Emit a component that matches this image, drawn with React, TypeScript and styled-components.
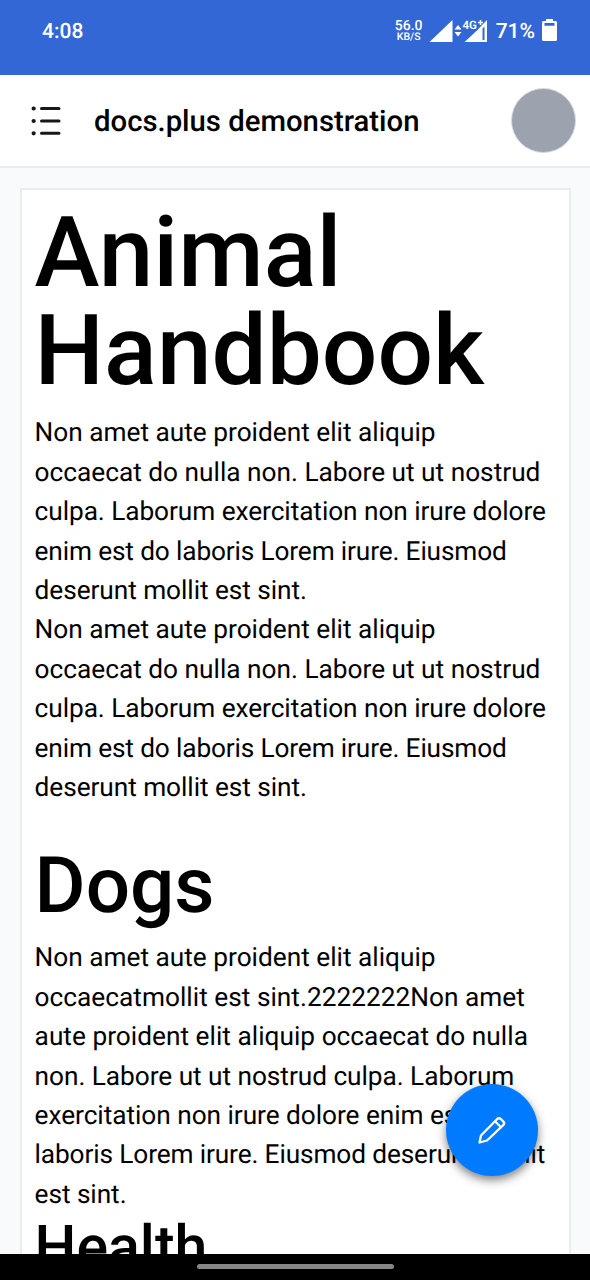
import styled, { createGlobalStyle } from 'styled-components';

const Global = createGlobalStyle`
  * { box-sizing: border-box; }
  body { margin: 0; font-family: Roboto, sans-serif; background: #000; color: #000; text-rendering: geometricPrecision; }
`;
const Screen = styled.div`
  position: relative; width: 590px; height: 1280px; display: flex; flex-direction: column; overflow: hidden;
`;
const StatusBar = styled.div`
  height: 75px; flex: none; background: #3367d6; color: #fff; display: flex; justify-content: space-between; align-items: center;
  padding: 0 33px 13px 42px; font-size: 21px; font-weight: 500;
`;
const StatusGroup = styled.div`display: flex; align-items: center;`;
const StatusText = styled.span`padding-top: 2px;`;
const Speed = styled.div`
  font-size: 14px; line-height: 11px; text-align: center; width: 28px; margin-right: 6px;
  small { display: block; font-size: 10.5px; line-height: 9px; }
`;
const Signals = styled.svg`display: block; margin-right: 7px;`;
const Battery = styled.svg`display: block; margin-left: 7px;`;
const Header = styled.header`
  height: 93px; flex: none; background: #fff; border-bottom: 2px solid #e8ecee; display: flex; align-items: center; padding: 0 14px 0 31px;
`;
const Title = styled.div`font-size: 29.3px; font-weight: 500; margin: 2px 0 0 32px; flex: 1; white-space: nowrap;`;
const Avatar = styled.div`width: 65px; height: 65px; border-radius: 50%; background: #9ca3af; border: 1px solid #d5dae1;`;
const Main = styled.main`flex: 1; min-height: 0; background: #f8fafb; padding: 20px 19.5px 0 20px; overflow: hidden;`;
const Page = styled.article`background: #fff; border: 2px solid #e8edee; height: 1200px; padding: 14px 0 0 12.6px; white-space: nowrap;`;
const H1 = styled.h1`margin: 0; font-size: 98px; line-height: 98.4px; font-weight: 500;`;
const H2 = styled.h2`margin: 38.5px 0 0; font-size: 78.2px; line-height: 78.7px; font-weight: 500;`;
const H3 = styled.h3`margin: 2.5px 0 0; font-size: 59px; line-height: 59px; font-weight: 500;`;
const Paragraph = styled.p<{ $top?: number }>`margin: ${p => p.$top || 0}px 0 0; font-size: 26.24px; line-height: 39.4px;`;
const Line = styled.span<{ $track: number }>`display: block; letter-spacing: ${p => p.$track}px;`;
const NavBar = styled.div`height: 26px; flex: none; background: #000; display: flex; justify-content: center; align-items: center; padding-bottom: 2px;`;
const Handle = styled.div`width: 197px; height: 5px; border-radius: 3px; background: #868686;`;
const EditButton = styled.button`
  position: absolute; left: 446px; top: 1084px; width: 92px; height: 92px; border: 0; border-radius: 50%; padding: 0;
  background: #007bff; display: flex; align-items: center; justify-content: center; box-shadow: 0 4px 10px rgba(0,0,0,.5);
`;

type TextLine = [string, number];
const intro: TextLine[] = [
  ['Non amet aute proident elit aliquip', 0],
  ['occaecat do nulla non. Labore ut ut nostrud', 0],
  ['culpa. Laborum exercitation non irure dolore', -0.06],
  ['enim est do laboris Lorem irure. Eiusmod', -0.14],
  ['deserunt mollit est sint.', -0.06],
];
const dogs: TextLine[] = [
  ['Non amet aute proident elit aliquip', 0],
  ['occaecatmollit est sint.2222222Non amet', 0.02],
  ['aute proident elit aliquip occaecat do nulla', 0.02],
  ['non. Labore ut ut nostrud culpa. Laborum', -0.04],
  ['exercitation non irure dolore enim est do', -0.04],
  ['laboris Lorem irure. Eiusmod deserunt mollit', -0.12],
  ['est sint.', -0.06],
];
const Lines = ({ items }: { items: TextLine[] }) => <>{items.map(([text, track]) => <Line key={text} $track={track}>{text}</Line>)}</>;

export default function App() {
  return (
    <Screen>
      <Global />
      <StatusBar>
        <StatusText>4:08</StatusText>
        <StatusGroup>
          <Speed>56.0<small>KB/S</small></Speed>
          <Signals width="60" height="24" viewBox="0 0 60 24" fill="#fff">
            <path d="M23.500 1v22H.5z" />
            <path d="M25.500 10.500l3.500-4.500 3.500 4.500zM25.500 13l3.500 4.500 3.500-4.500z" />
            <path fillRule="evenodd" d="M58 1v22H35.500L48.500 11l5-5.500zM53.500 9.500v11.500h2V7.500z" />
            <text x="33.500" y="10" fontSize="11.500" fontWeight="600">4G</text>
            <path d="M49 3.500h5M51.500 1v5" stroke="#fff" strokeWidth="1.500" />
          </Signals>
          <StatusText>71%</StatusText>
          <Battery width="15" height="24" viewBox="0 0 15 24" fill="#fff"><path fillRule="evenodd" d="M4 0h7v2h2.500q1.500 0 1.500 1.500v17q0 1.500-1.500 1.500h-12Q0 22 0 20.500v-17Q0 2 1.500 2H4zM2.500 4v2.800h10V4z" /></Battery>
        </StatusGroup>
      </StatusBar>
      <Header>
        <svg width="31" height="30" viewBox="0 0 31 30" fill="none" stroke="#181818" strokeWidth="3" strokeLinecap="round">
          <path d="M10.500 2.500H28M10.500 15H28M10.500 27.300H28" />
          <path strokeWidth="4.200" d="M2.600 2.500h.1M2.600 15h.1M2.600 27.300h.1" />
        </svg>
        <Title>docs.plus demonstration</Title>
        <Avatar />
      </Header>
      <Main>
        <Page>
          <H1>Animal<br />Handbook</H1>
          <Paragraph $top={13.5}><Lines items={intro} /></Paragraph>
          <Paragraph><Lines items={intro} /></Paragraph>
          <H2>Dogs</H2>
          <Paragraph $top={13.8}><Lines items={dogs} /></Paragraph>
          <H3>Health</H3>
        </Page>
      </Main>
      <NavBar><Handle /></NavBar>
      <EditButton aria-label="Edit">
        <svg width="30" height="30" viewBox="0 0 30 30" fill="none" stroke="#fff" strokeWidth="2.300" strokeLinejoin="round">
          <path d="M2.500 27.500L4 20.500 20 4.200q2-1.900 4 0l2.200 2.200q1.900 1.900 0 3.800L10 25.500zM18 6.300l6 6" />
        </svg>
      </EditButton>
    </Screen>
  );
}
